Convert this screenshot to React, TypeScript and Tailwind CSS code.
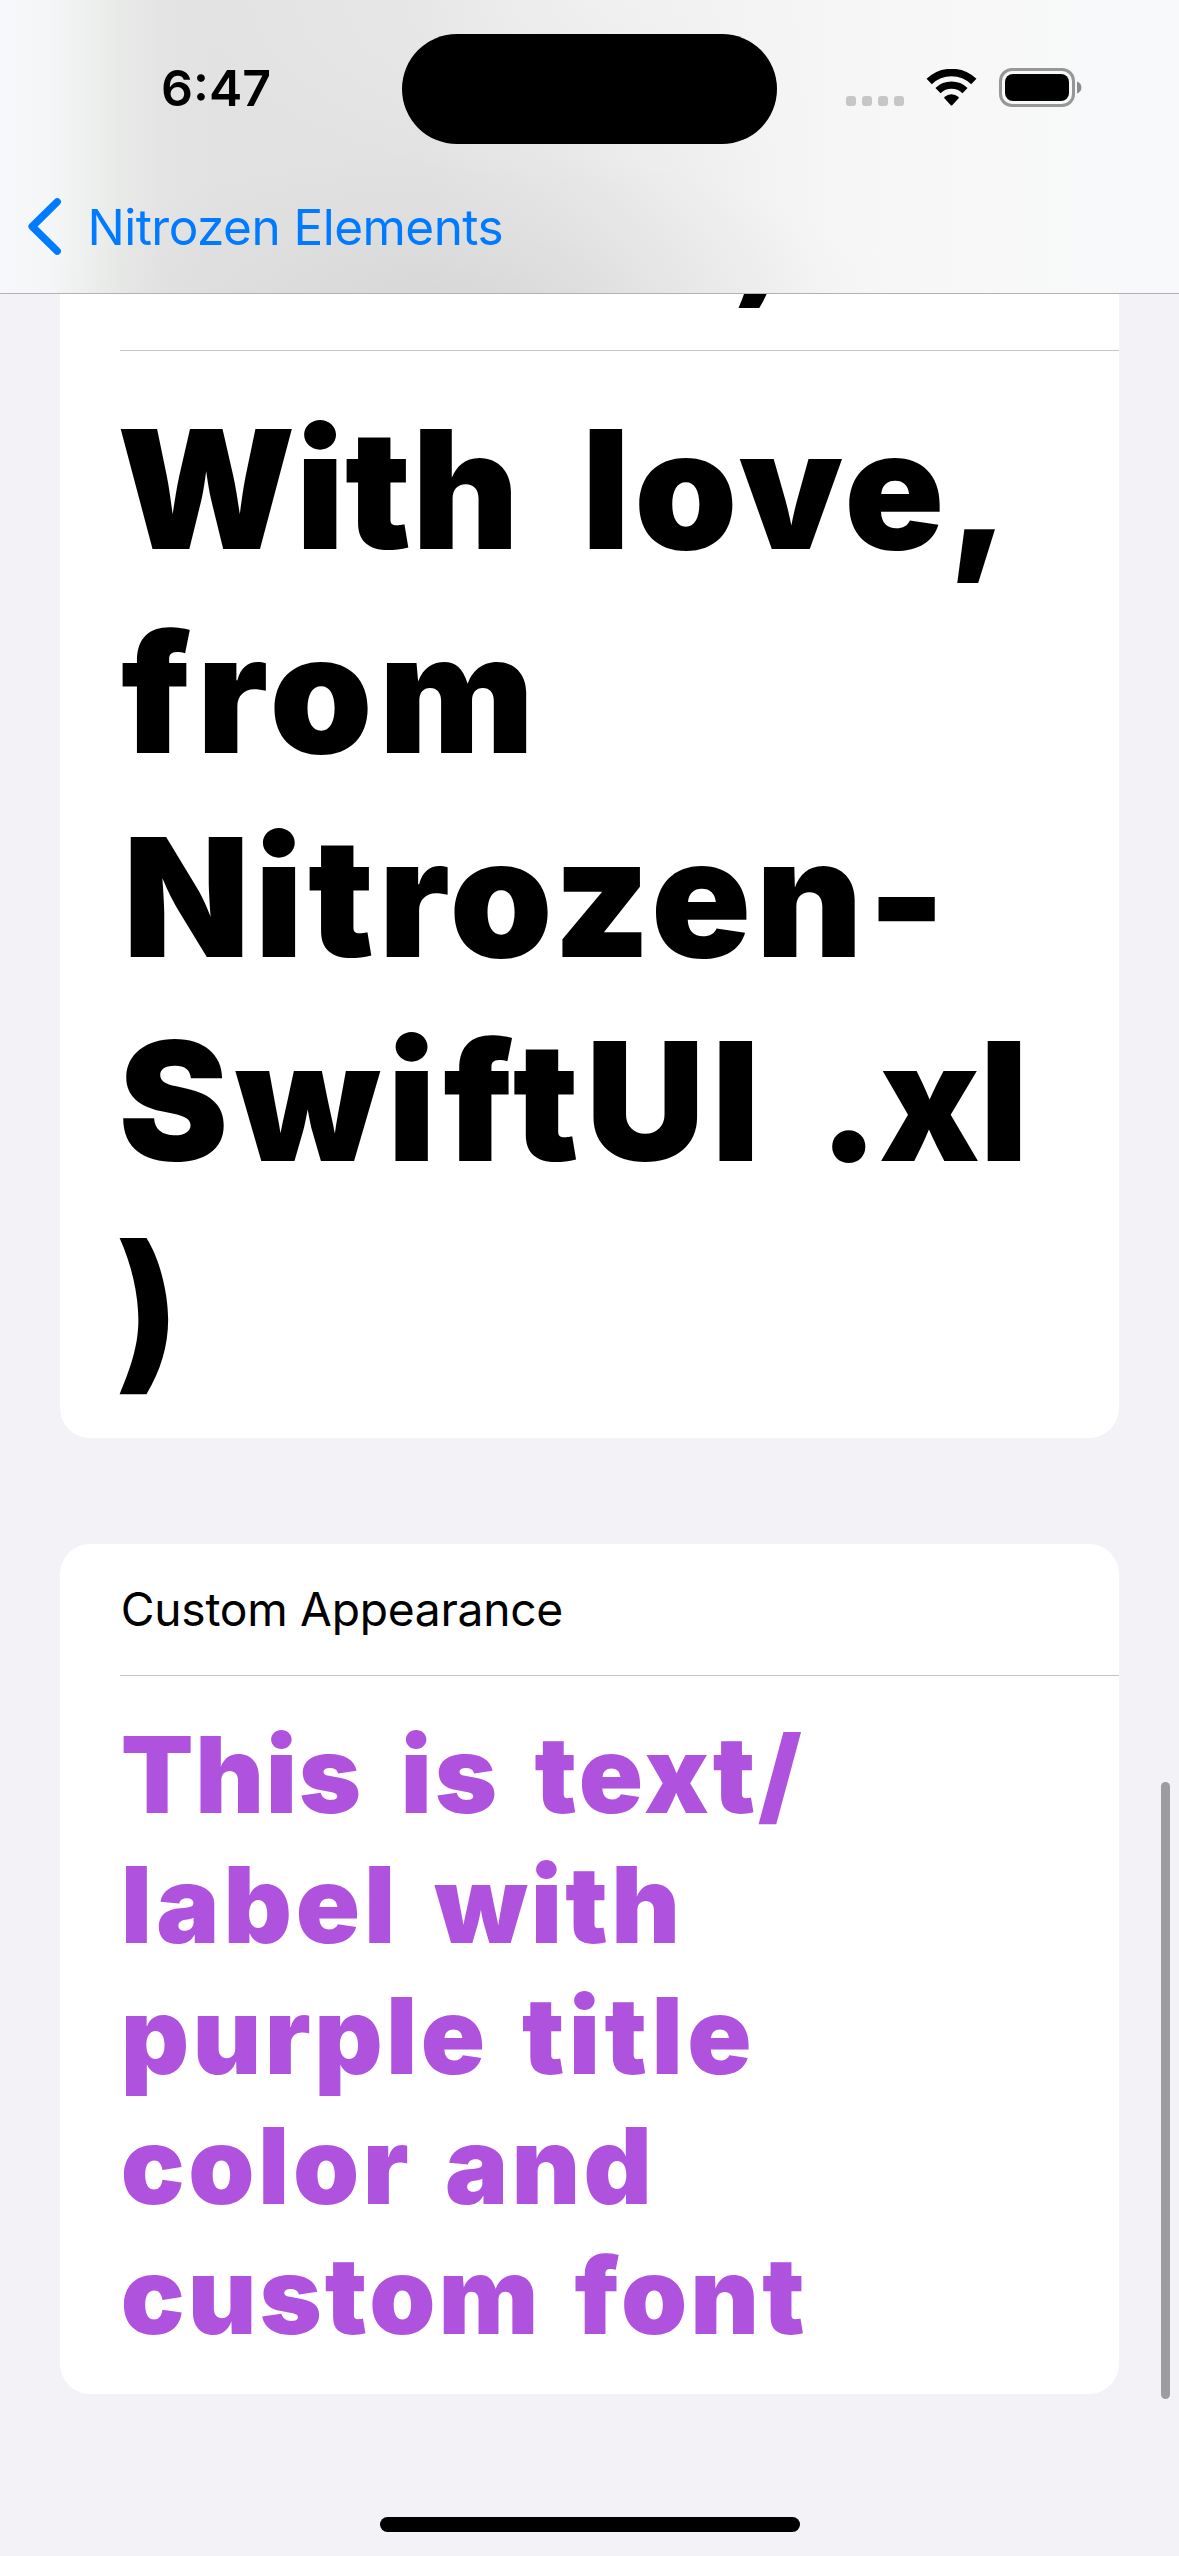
function StatusBar() {
  return (
    <div className="flex h-[177px] w-full">
      <div className="flex w-[402px] pl-[161px]">
        <span className="mt-[58px] h-[60px] text-[50px] font-semibold leading-[60px] text-black">6:47</span>
      </div>
      <div className="mt-[34px] h-[110px] w-[375px] rounded-full bg-black" />
      <div className="ml-[69px] mt-[68px] flex h-[39px] items-start">
        <div className="mt-7 flex gap-1.5">
          <i className="size-2.5 rounded-[3px] bg-[#c6c6c6]" />
          <i className="size-2.5 rounded-[3px] bg-[#c6c6c6]" />
          <i className="size-2.5 rounded-[3px] bg-[#c6c6c6]" />
          <i className="size-2.5 rounded-[3px] bg-[#c6c6c6]" />
        </div>
        <svg className="ml-[22px] mt-px h-[37px] w-[51px]" viewBox="0 0 51 37" fill="none">
          <path d="M3.2 12.6 A32 32 0 0 1 47.8 12.6" stroke="#000" strokeWidth="7.6" />
          <path d="M12 21.6 A19.5 19.5 0 0 1 39 21.6" stroke="#000" strokeWidth="7.4" />
          <path d="M18.6 29.6 Q17.6 28.6 18.7 27.7 Q21.6 25.2 25.5 25.2 Q29.4 25.2 32.3 27.7 Q33.4 28.6 32.4 29.6 L26.2 36.2 Q25.5 36.9 24.8 36.2 Z" fill="#000" />
        </svg>
        <div className="ml-[22px] h-[39px] w-[76px] rounded-[13px] border-[3px] border-[#979797] p-[3px]">
          <div className="h-[27px] w-[64px] rounded-[8px] bg-black" />
        </div>
        <svg className="ml-0.5 mt-[13px] h-[13px] w-[5px]" viewBox="0 0 5 13">
          <path d="M0 0.5 Q4.4 2 4.4 6.5 Q4.4 11 0 12.5 Z" fill="#8c8c8c" />
        </svg>
      </div>
    </div>
  );
}

function NavBar() {
  return (
    <div className="flex h-[116px] items-start text-[#007aff]">
      <svg className="ml-6 mt-[16px] h-[68px] w-[44px]" viewBox="24 193 44 68" fill="none">
        <path d="M57.2 201.8 L32.2 226.5 L57.2 251.2" stroke="#007aff" strokeWidth="7.4" strokeLinecap="round" strokeLinejoin="round" />
      </svg>
      <span className="ml-[19.5px] mt-5 text-[49.5px] leading-[60px] tracking-[-0.54px]">Nitrozen Elements</span>
    </div>
  );
}

function Header() {
  return (
    <header className="absolute inset-x-0 top-0 z-10 h-[294px] overflow-hidden border-b border-[#b2b2b3] bg-[#f7f8f8]">
      <div className="absolute inset-0 bg-[linear-gradient(90deg,#f6f8fb_0px,#f4f6f7_50px,#eff1f0_85px,#e8eae8_120px,#e4e4e4_160px,#e2e2e2_220px,#e2e2e2_420px,#e7e7e7_560px,#efefef_700px,#f6f6f6_830px,#f7f8f7_1000px,#f8f9fb_1150px)]" />
      <div className="absolute inset-0 bg-[radial-gradient(ellipse_420px_190px_at_600px_0px,rgba(247,247,247,0.5),rgba(247,247,247,0.15)_60%,rgba(247,247,247,0))]" />
      <div className="absolute inset-0 bg-[radial-gradient(ellipse_420px_160px_at_460px_310px,rgba(205,205,205,0.55),rgba(205,205,205,0.2)_55%,rgba(205,205,205,0))]" />
      <div className="relative">
        <StatusBar />
        <NavBar />
      </div>
    </header>
  );
}

function Divider() {
  return <div className="ml-[60px] h-px bg-[#c6c6c8]" />;
}

function ExtraLargeLabel() {
  return (
    <div className="pl-[60px] pt-[36px] text-[165px] font-black leading-[204px] text-black">
      <div className="flex gap-[62px] whitespace-nowrap">
        <span className="-ml-[3px] tracking-[0.3px]">With</span>
        <span className="tracking-[4px]">love,</span>
      </div>
      <div className="flex whitespace-nowrap">
        <span className="ml-px tracking-[6.2px]">from</span>
      </div>
      <div className="flex whitespace-nowrap">
        <span className="ml-[3px] tracking-[4.6px]">Nitrozen-</span>
      </div>
      <div className="flex gap-[51px] whitespace-nowrap">
        <span className="-ml-[1.5px] tracking-[7.1px]">SwiftUI</span>
        <span className="tracking-[-0.3px]">.xl</span>
      </div>
      <div className="flex h-[204px]">
        <span className="-ml-[5px] mt-[3px] text-[172px] font-extrabold leading-[204px]">)</span>
      </div>
    </div>
  );
}

function PurpleLabel() {
  return (
    <div className="pl-[60.8px] pt-[34px] text-[106px] font-black leading-[130.25px] text-[#af52de]">
      <div className="flex whitespace-nowrap">
        <span className="tracking-[1.7px]">This</span>
        <span className="ml-[37.5px] tracking-[2.9px]">is</span>
        <span className="ml-[34.6px] tracking-[3px]">text/</span>
      </div>
      <div className="flex gap-[35px] whitespace-nowrap">
        <span className="tracking-[4px]">label</span>
        <span className="tracking-[3.2px]">with</span>
      </div>
      <div className="flex gap-[33.6px] whitespace-nowrap">
        <span className="tracking-[3.4px]">purple</span>
        <span className="tracking-[4.3px]">title</span>
      </div>
      <div className="flex gap-[32.8px] whitespace-nowrap">
        <span className="tracking-[3.55px]">color</span>
        <span className="tracking-[3.2px]">and</span>
      </div>
      <div className="flex gap-[33.2px] whitespace-nowrap">
        <span className="tracking-[3px]">custom</span>
        <span className="tracking-[3.1px]">font</span>
      </div>
    </div>
  );
}

export default function App() {
  return (
    <div className="relative h-[2556px] w-[1179px] overflow-hidden bg-[#f2f2f7] font-['Inter',sans-serif]">
      <Header />

      <main className="px-[60px] pt-[150px]">
        <section className="h-[1288px] rounded-b-[30px] bg-white">
          <div className="flex h-[200px] items-end pl-[675px]">
            <span className="mb-[28px] text-[133px] font-extrabold leading-[160px] text-black">)</span>
          </div>
          <Divider />
          <ExtraLargeLabel />
        </section>

        <section className="mt-[106px] h-[850px] rounded-[30px] bg-white">
          <div className="flex h-[131px] items-center pl-[60.8px] pt-px text-[46.2px] tracking-[-0.28px] text-black">
            Custom Appearance
          </div>
          <Divider />
          <PurpleLabel />
        </section>
      </main>

      <div className="absolute left-[1161px] top-[1782px] h-[617px] w-[9px] rounded-full bg-[#9c9ca1]" />
      <div className="absolute left-[380px] top-[2517px] h-[15px] w-[420px] rounded-full bg-black" />
    </div>
  );
}
